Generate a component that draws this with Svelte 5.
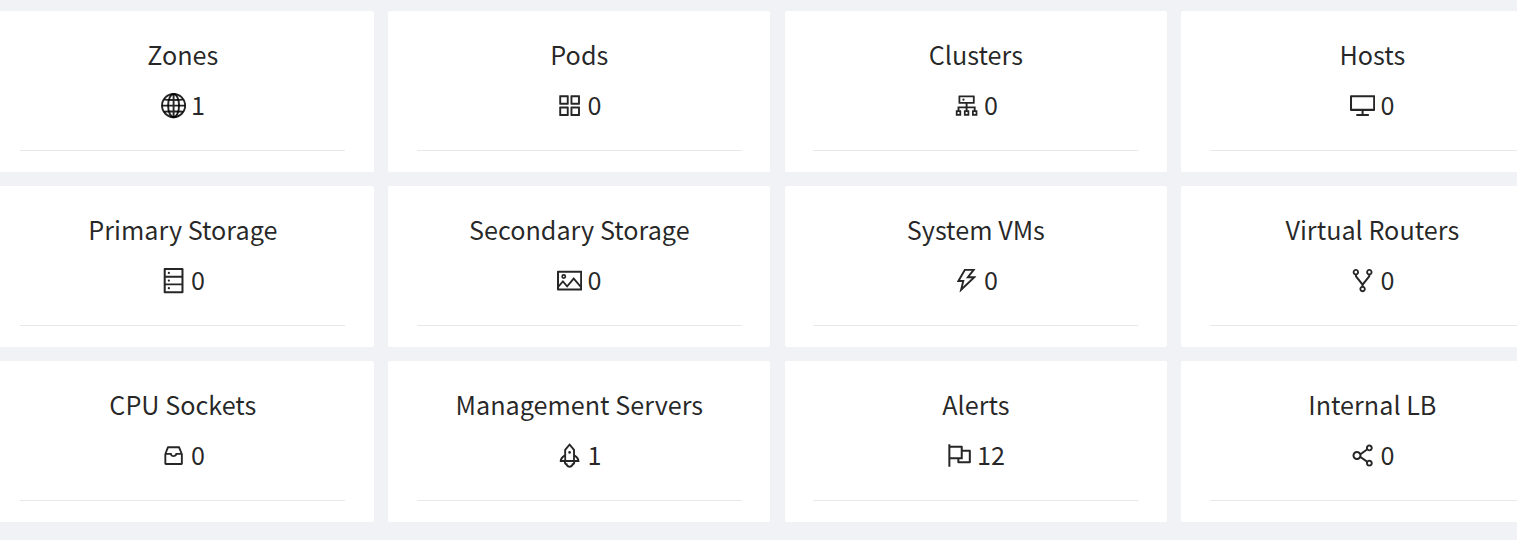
<script>
  // ant-design outlined icons, viewBox 64 64 896 896 unless noted
  const icons = {
    appstore: "M464 144H160c-8.8 0-16 7.2-16 16v304c0 8.8 7.2 16 16 16h304c8.8 0 16-7.2 16-16V160c0-8.8-7.2-16-16-16zm-52 268H212V212h200v200zm452-268H560c-8.8 0-16 7.2-16 16v304c0 8.8 7.2 16 16 16h304c8.8 0 16-7.2 16-16V160c0-8.8-7.2-16-16-16zm-52 268H612V212h200v200zM464 544H160c-8.8 0-16 7.2-16 16v304c0 8.8 7.2 16 16 16h304c8.8 0 16-7.2 16-16V560c0-8.8-7.2-16-16-16zm-52 268H212V612h200v200zm452-268H560c-8.8 0-16 7.2-16 16v304c0 8.8 7.2 16 16 16h304c8.8 0 16-7.2 16-16V560c0-8.8-7.2-16-16-16zm-52 268H612V612h200v200z",
    cluster: "M888 680h-54V540H546v-92h238c8.8 0 16-7.2 16-16V168c0-8.8-7.2-16-16-16H240c-8.8 0-16 7.2-16 16v264c0 8.8 7.2 16 16 16h238v92H190v140h-54c-4.4 0-8 3.6-8 8v176c0 4.4 3.6 8 8 8h176c4.4 0 8-3.6 8-8V688c0-4.4-3.6-8-8-8h-54v-72h220v72h-54c-4.4 0-8 3.6-8 8v176c0 4.4 3.6 8 8 8h176c4.4 0 8-3.6 8-8V688c0-4.4-3.6-8-8-8h-54v-72h220v72h-54c-4.4 0-8 3.6-8 8v176c0 4.4 3.6 8 8 8h176c4.4 0 8-3.6 8-8V688c0-4.4-3.6-8-8-8zM256 805.3c0 1.5-1.2 2.7-2.7 2.7h-58.7c-1.5 0-2.7-1.2-2.7-2.7v-58.7c0-1.5 1.2-2.7 2.7-2.7h58.7c1.5 0 2.7 1.2 2.7 2.7v58.7zm288 0c0 1.5-1.2 2.7-2.7 2.7h-58.7c-1.5 0-2.7-1.2-2.7-2.7v-58.7c0-1.5 1.2-2.7 2.7-2.7h58.7c1.5 0 2.7 1.2 2.7 2.7v58.7zM288 384V216h448v168H288zm544 421.3c0 1.5-1.2 2.7-2.7 2.7h-58.7c-1.5 0-2.7-1.2-2.7-2.7v-58.7c0-1.5 1.2-2.7 2.7-2.7h58.7c1.5 0 2.7 1.2 2.7 2.7v58.7zM360 300a40 40 0 1 0 80 0 40 40 0 1 0-80 0z",
    desktop: "M928 140H96c-17.7 0-32 14.3-32 32v496c0 17.7 14.3 32 32 32h380v112H304c-8.8 0-16 7.2-16 16v48c0 4.4 3.6 8 8 8h432c4.4 0 8-3.6 8-8v-48c0-8.8-7.2-16-16-16H548V700h380c17.7 0 32-14.3 32-32V172c0-17.7-14.3-32-32-32zm-40 488H136V212h752v416z",
    database: "M832 64H192c-17.7 0-32 14.3-32 32v832c0 17.7 14.3 32 32 32h640c17.7 0 32-14.3 32-32V96c0-17.7-14.3-32-32-32zm-600 72h560v208H232V136zm560 480H232V408h560v208zm0 272H232V680h560v208zM304 240a40 40 0 1 0 80 0 40 40 0 1 0-80 0zm0 272a40 40 0 1 0 80 0 40 40 0 1 0-80 0zm0 272a40 40 0 1 0 80 0 40 40 0 1 0-80 0z",
    picture: "M928 160H96c-17.7 0-32 14.3-32 32v640c0 17.7 14.3 32 32 32h832c17.7 0 32-14.3 32-32V192c0-17.7-14.3-32-32-32zm-40 632H136v-39.9l138.5-164.3 150.1 178L658.1 489 888 761.6V792zm0-129.8L664.2 396.8c-3.2-3.8-9-3.8-12.2 0L424.6 666.4l-144-170.7c-3.2-3.8-9-3.8-12.2 0L136 652.7V232h752v430.2zM304 456a88 88 0 1 0 0-176 88 88 0 0 0 0 176zm0-116c15.5 0 28 12.5 28 28s-12.5 28-28 28-28-12.5-28-28 12.5-28 28-28z",
    thunderbolt: "M848 359.3H627.7L825.8 109c4.1-5.3.4-13-6.3-13H436c-2.8 0-5.5 1.5-6.9 4L170 547.5c-3.1 5.3.7 12 6.9 12h174.4l-89.4 357.6c-1.9 7.8 7.5 13.3 13.3 7.7L853.5 373c5.2-4.9 1.7-13.7-5.5-13.7zM378.2 732.5l60.3-241H281.1l189.6-327.4h224.6L487 427.4h211L378.2 732.5z",
    fork: "M752 100c-61.8 0-112 50.2-112 112 0 47.7 29.9 88.5 72 104.6v27.6L512 601.4 312 344.2v-27.6c42.1-16.1 72-56.9 72-104.6 0-61.8-50.2-112-112-112s-112 50.2-112 112c0 50.6 33.8 93.5 80 107.3v34.4c0 9.7 3.3 19.3 9.3 27L476 672.3v33.6c-44.2 15-76 56.9-76 106.1 0 61.8 50.2 112 112 112s112-50.2 112-112c0-49.2-31.8-91-76-106.1v-33.6l226.7-291.6c6-7.7 9.3-17.3 9.3-27v-34.4c46.2-13.8 80-56.7 80-107.3 0-61.8-50.2-112-112-112zM224 212a48.01 48.01 0 0 1 96 0 48.01 48.01 0 0 1-96 0zm336 600a48.01 48.01 0 0 1-96 0 48.01 48.01 0 0 1 96 0zm192-552a48.01 48.01 0 0 1 0-96 48.01 48.01 0 0 1 0 96z",
    inbox: "M885.2 446.3l-.2-.8-112.2-285.1c-5-16.1-19.9-27.2-36.8-27.2H281.2c-17 0-32.1 11.3-36.9 27.6L139.4 443l-.3.7-.2.8c-1.3 4.9-1.7 9.9-1 14.8-.1 1.6-.2 3.2-.2 4.8V830a60.9 60.9 0 0 0 60.8 60.8h627.2c33.5 0 60.8-27.3 60.9-60.8V464.1c0-1.3 0-2.6-.1-3.7.4-4.9 0-9.6-1.3-14.1zm-295.8-43l-.3 15.7c-.8 44.9-31.8 75.1-77.1 75.1-22.1 0-41.1-7.1-54.8-20.6S436 441.2 435.6 419l-.3-15.7H229.5L309 210h399.2l81.7 193.3H589.4zm-375 76.8h157.3c24.3 57.1 76 90.8 140.4 90.8 33.7 0 65-9.4 90.3-27.2 22.2-15.6 39.5-37.4 50.7-63.6h156.5V814H214.4V480.1z",
    rocket: "M864 736c0-111.6-65.4-208-160-252.9V317.3c0-15.1-5.3-29.7-15.1-41.2L536.5 95.4C530.1 87.8 521 84 512 84s-18.1 3.8-24.5 11.4L335.1 276.1a63.97 63.97 0 0 0-15.1 41.2v165.8C225.4 528 160 624.4 160 736h156.5c-2.3 7.2-3.5 15-3.5 23.8 0 22.1 7.6 43.7 21.4 60.8a97.2 97.2 0 0 0 43.1 30.6c23.1 54 75.6 88.8 134.5 88.8 29.1 0 57.3-8.6 81.4-24.8 23.6-15.8 41.9-37.9 53-64a97 97 0 0 0 43.1-30.5 97.52 97.52 0 0 0 21.4-60.8c0-8.4-1.1-16.4-3.1-23.8H864zM762.3 621.4c9.4 14.6 17 30.3 22.5 46.6H700V558.7a211.6 211.6 0 0 1 62.3 62.7zM388 483.1V318.8l124-147 124 147V668H388V483.1zM239.2 668c5.5-16.3 13.1-32 22.5-46.6 16.3-25.2 37.5-46.5 62.3-62.7V668h-84.8zm388.9 116.2c-5.2 3-11.2 4.2-17.1 3.4l-19.5-2.4-2.8 19.4c-5.4 37.9-38.4 66.5-76.7 66.5-38.3 0-71.3-28.6-76.7-66.5l-2.8-19.5-19.5 2.5a27.8 27.8 0 0 1-17.1-3.5c-8.7-5-14.1-14.3-14.1-24.4 0-10.6 5.9-19.4 14.6-23.8h231.3c8.8 4.5 14.6 13.3 14.6 23.8-.1 10.2-5.5 19.6-14.1 24.5zM464 400a48 48 0 1 0 96 0 48 48 0 1 0-96 0z",
    flag: "M880 305H624V192c0-17.7-14.3-32-32-32H184v-40c0-4.4-3.6-8-8-8h-56c-4.4 0-8 3.6-8 8v784c0 4.4 3.6 8 8 8h56c4.4 0 8-3.6 8-8V640h248v113c0 17.7 14.3 32 32 32h416c17.7 0 32-14.3 32-32V337c0-17.7-14.3-32-32-32zM184 568V232h368v336H184zm656 145H504v-73h112c4.4 0 8-3.6 8-8V377h216v336z",
    share: "M752 664c-28.5 0-54.8 10-75.4 26.7L469.4 540.8a160.68 160.68 0 0 0 0-57.6l207.2-149.9C697.2 350 723.5 360 752 360c66.2 0 120-53.8 120-120s-53.8-120-120-120-120 53.8-120 120c0 11.6 1.6 22.7 4.7 33.3L439.9 415.8C410.7 377.1 364.3 352 312 352c-88.4 0-160 71.6-160 160s71.6 160 160 160c52.3 0 98.7-25.1 127.9-63.8l196.8 142.5c-3.1 10.6-4.7 21.8-4.7 33.3 0 66.2 53.8 120 120 120s120-53.8 120-120-53.8-120-120-120zm0-476c28.7 0 52 23.3 52 52s-23.3 52-52 52-52-23.3-52-52 23.3-52 52-52zM312 600c-48.5 0-88-39.5-88-88s39.5-88 88-88 88 39.5 88 88-39.5 88-88 88zm440 236c-28.7 0-52-23.3-52-52s23.3-52 52-52 52 23.3 52 52-23.3 52-52 52z"
  };

  const items = [
    { title: "Zones", icon: "global", count: 1 },
    { title: "Pods", icon: "appstore", count: 0 },
    { title: "Clusters", icon: "cluster", count: 0 },
    { title: "Hosts", icon: "desktop", count: 0 },
    { title: "Primary Storage", icon: "database", count: 0 },
    { title: "Secondary Storage", icon: "picture", count: 0 },
    { title: "System VMs", icon: "thunderbolt", count: 0 },
    { title: "Virtual Routers", icon: "fork", count: 0 },
    { title: "CPU Sockets", icon: "inbox", count: 0, box: "0 0 1024 1024" },
    { title: "Management Servers", icon: "rocket", count: 1 },
    { title: "Alerts", icon: "flag", count: 12 },
    { title: "Internal LB", icon: "share", count: 0 }
  ];
</script>

<div class="grid">
  {#each items as item}
    <div class="card">
      <h2>{item.title}</h2>
      <div class="count">
        {#if item.icon === "global"}
          <svg class="globe" viewBox="64 64 896 896" aria-hidden="true">
            <circle cx="512" cy="512" r="412" />
            <ellipse cx="512" cy="512" rx="195" ry="412" />
            <path d="M512 100v824M100 512h824M165 290c110 30 584 30 694 0M165 734c110-30 584-30 694 0" />
          </svg>
        {:else}
          <svg viewBox={item.box || "64 64 896 896"} aria-hidden="true"><path d={icons[item.icon]} /></svg>
        {/if}
        {item.count}
      </div>
      <div class="divider"></div>
    </div>
  {/each}
</div>

<style>
  :global(body) {
    background: #f0f2f5;
    overflow: hidden;
  }

  .grid {
    display: grid;
    grid-template-columns: repeat(4, 382.25px);
    gap: 14px 14.25px;
    margin-left: -8.3px;
    padding-top: 11px;
    font-family: "Noto Sans CJK SC", "Noto Sans", sans-serif;
    color: rgba(0, 0, 0, 0.85);
  }

  .card {
    background: #fff;
    border-radius: 2px;
    padding: 24px 28.5px 21px;
    text-align: center;
  }

  h2 {
    margin: 0 0 12px;
    font-size: 25.2px;
    font-weight: 400;
    line-height: 38px;
  }

  .count {
    font-size: 25.2px;
    line-height: 38px;
    margin-bottom: 27px;
  }

  svg {
    display: inline-block;
    width: 25.2px;
    height: 25.2px;
    margin-right: -0.5px;
    vertical-align: -3.5px;
    fill: currentColor;
  }

  .globe {
    fill: none;
    stroke: currentColor;
    stroke-width: 68;
  }

  .divider {
    height: 1px;
    background: #e8e8e8;
  }
</style>
